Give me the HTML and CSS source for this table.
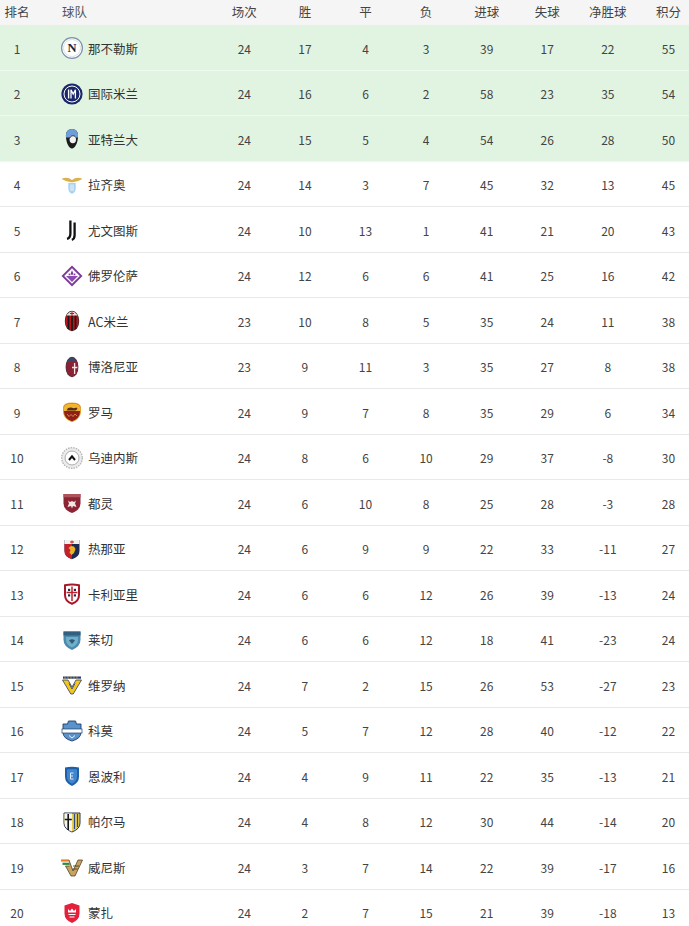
FILE: index.html
```html
<!DOCTYPE html>
<html lang="zh">
<head>
<meta charset="utf-8">
<title>积分榜</title>
<link rel="stylesheet" href="styles.css">
</head>
<body>
<div class="table">
  <div class="row head">
    <div class="c rank">排名</div><div class="c team">球队</div>
    <div class="c n">场次</div><div class="c n">胜</div><div class="c n">平</div><div class="c n">负</div><div class="c n">进球</div><div class="c n">失球</div><div class="c n">净胜球</div><div class="c n">积分</div>
  </div>

  <div class="row top">
    <div class="c rank">1</div>
    <div class="c team"><span class="logo"><svg viewBox="0 0 24 24"><circle cx="12" cy="12" r="10.4" fill="#fff" stroke="#7f90a8" stroke-width="1.2"/><circle cx="12" cy="12" r="8.5" fill="none" stroke="#c3ccd8" stroke-width="0.6"/><text x="12" y="16.3" text-anchor="middle" font-family="Liberation Serif" font-weight="bold" font-size="12.5" fill="#1b2232">N</text></svg></span><span class="name">那不勒斯</span></div>
    <div class="c n">24</div><div class="c n">17</div><div class="c n">4</div><div class="c n">3</div><div class="c n">39</div><div class="c n">17</div><div class="c n">22</div><div class="c n">55</div>
  </div>

  <div class="row top">
    <div class="c rank">2</div>
    <div class="c team"><span class="logo"><svg viewBox="0 0 24 24"><circle cx="12" cy="12" r="10.6" fill="#1a2768"/><circle cx="12" cy="12" r="8" fill="none" stroke="#fff" stroke-width="1"/><path d="M8.6 7.5V16.5" stroke="#fff" stroke-width="1.4"/><path d="M11 16.5V7.8L13.2 12L15.4 7.8V16.5" fill="none" stroke="#fff" stroke-width="1.3"/></svg></span><span class="name">国际米兰</span></div>
    <div class="c n">24</div><div class="c n">16</div><div class="c n">6</div><div class="c n">2</div><div class="c n">58</div><div class="c n">23</div><div class="c n">35</div><div class="c n">54</div>
  </div>

  <div class="row top">
    <div class="c rank">3</div>
    <div class="c team"><span class="logo"><svg viewBox="0 0 24 24"><path d="M12 2C16.5 2 18.5 5.5 18 10.5C17.6 16 15 21.5 12 21.5C9 21.5 6.4 16 6 10.5C5.5 5.5 7.5 2 12 2Z" fill="#1b1b1b"/><path d="M12 2C16.5 2 18.5 5.5 18 10.5L6 10.5C5.5 5.5 7.5 2 12 2Z" fill="#6c9fd8"/><ellipse cx="12.8" cy="12.5" rx="3.2" ry="3.8" fill="#f2f2f2"/><path d="M10 11C10.5 8.5 14 8 15.5 10" fill="none" stroke="#222" stroke-width="0.9"/></svg></span><span class="name">亚特兰大</span></div>
    <div class="c n">24</div><div class="c n">15</div><div class="c n">5</div><div class="c n">4</div><div class="c n">54</div><div class="c n">26</div><div class="c n">28</div><div class="c n">50</div>
  </div>

  <div class="row">
    <div class="c rank">4</div>
    <div class="c team"><span class="logo"><svg viewBox="0 0 24 24"><path d="M1.5 6Q7 3.2 12 7Q17 3.2 22.5 6Q18 8.6 13 9.3L11 9.3Q6 8.6 1.5 6Z" fill="#d9b24c"/><path d="M8.3 10H15.7V15.5Q15.7 19.5 12 20.8Q8.3 19.5 8.3 15.5Z" fill="#a8d3f0"/><path d="M11 11.5V18M13 11.5V18" stroke="#fff" stroke-width="0.8"/></svg></span><span class="name">拉齐奥</span></div>
    <div class="c n">24</div><div class="c n">14</div><div class="c n">3</div><div class="c n">7</div><div class="c n">45</div><div class="c n">32</div><div class="c n">13</div><div class="c n">45</div>
  </div>

  <div class="row">
    <div class="c rank">5</div>
    <div class="c team"><span class="logo"><svg viewBox="0 0 24 24"><path d="M10.4 2.5V15.5Q10.4 20 7 20.8" fill="none" stroke="#111" stroke-width="2.3"/><path d="M14.6 4.5V17.3Q14.6 21 11.8 21.8" fill="none" stroke="#111" stroke-width="2.3"/></svg></span><span class="name">尤文图斯</span></div>
    <div class="c n">24</div><div class="c n">10</div><div class="c n">13</div><div class="c n">1</div><div class="c n">41</div><div class="c n">21</div><div class="c n">20</div><div class="c n">43</div>
  </div>

  <div class="row">
    <div class="c rank">6</div>
    <div class="c team"><span class="logo"><svg viewBox="0 0 24 24"><path d="M12 1.5L22.5 12L12 22.5L1.5 12Z" fill="#7a3a99"/><path d="M12 4.2L19.8 12L12 19.8L4.2 12Z" fill="#fff"/><path d="M6 12H18L12 18Z" fill="#8d4ab2"/><path d="M12 6.2L13.4 9.8L12 11.2L10.6 9.8Z M8.8 9.2Q10.2 9.4 10.8 11.2H8.6Z M15.2 9.2Q13.8 9.4 13.2 11.2H15.4Z" fill="#7a3a99"/></svg></span><span class="name">佛罗伦萨</span></div>
    <div class="c n">24</div><div class="c n">12</div><div class="c n">6</div><div class="c n">6</div><div class="c n">41</div><div class="c n">25</div><div class="c n">16</div><div class="c n">42</div>
  </div>

  <div class="row">
    <div class="c rank">7</div>
    <div class="c team"><span class="logo"><svg viewBox="0 0 24 24"><defs><clipPath id="m7"><ellipse cx="12" cy="12" rx="6.6" ry="9.6"/></clipPath></defs><ellipse cx="12" cy="12" rx="7.2" ry="10.2" fill="#2a2a2a"/><g clip-path="url(#m7)"><rect x="4" y="2" width="16" height="20" fill="#c0141c"/><rect x="7.6" y="2" width="1.8" height="20" fill="#1a1a1a"/><rect x="11.1" y="2" width="1.8" height="20" fill="#1a1a1a"/><rect x="14.6" y="2" width="1.8" height="20" fill="#1a1a1a"/><rect x="4" y="2" width="16" height="4.5" fill="#e9e4e0"/><path d="M12 2.5V6.5M10 4.5H14" stroke="#c0141c" stroke-width="1"/></g></svg></span><span class="name">AC米兰</span></div>
    <div class="c n">23</div><div class="c n">10</div><div class="c n">8</div><div class="c n">5</div><div class="c n">35</div><div class="c n">24</div><div class="c n">11</div><div class="c n">38</div>
  </div>

  <div class="row">
    <div class="c rank">8</div>
    <div class="c team"><span class="logo"><svg viewBox="0 0 24 24"><defs><clipPath id="b8"><ellipse cx="12" cy="12" rx="5.8" ry="9.6"/></clipPath></defs><ellipse cx="12" cy="12" rx="6.4" ry="10.2" fill="#3e3340"/><g clip-path="url(#b8)"><rect x="5" y="2" width="14" height="20" fill="#8a2232"/><rect x="12" y="7" width="7" height="15" fill="#8c2436"/><rect x="5" y="2" width="14" height="5" fill="#3b4568"/><path d="M14.6 8V19M12 12.5H17.5" stroke="#f2e8ea" stroke-width="1.3"/></g></svg></span><span class="name">博洛尼亚</span></div>
    <div class="c n">23</div><div class="c n">9</div><div class="c n">11</div><div class="c n">3</div><div class="c n">35</div><div class="c n">27</div><div class="c n">8</div><div class="c n">38</div>
  </div>

  <div class="row">
    <div class="c rank">9</div>
    <div class="c team"><span class="logo"><svg viewBox="0 0 24 24"><path d="M3.5 7.5Q3.5 3 12 3Q20.5 3 20.5 7.5V11.5Q20.5 18.5 12 21.8Q3.5 18.5 3.5 11.5Z" fill="#8f1e1c" stroke="#e3a427" stroke-width="0.9"/><path d="M3.9 7.5Q3.9 3.4 12 3.4Q20.1 3.4 20.1 7.5V11H3.9Z" fill="#f1b52e"/><path d="M6.5 10.5L8 8L11 7.6L14 8.2L16.5 7.5L17.5 9L15.5 10.5Z" fill="#5a2a1a"/><path d="M7 14L9 16.5L11 14.5L13 16.5L15 14L17 16" fill="none" stroke="#e8a92d" stroke-width="0.8"/></svg></span><span class="name">罗马</span></div>
    <div class="c n">24</div><div class="c n">9</div><div class="c n">7</div><div class="c n">8</div><div class="c n">35</div><div class="c n">29</div><div class="c n">6</div><div class="c n">34</div>
  </div>

  <div class="row">
    <div class="c rank">10</div>
    <div class="c team"><span class="logo"><svg viewBox="0 0 24 24"><circle cx="12" cy="12" r="10.3" fill="#ececec" stroke="#b9b9b9" stroke-width="1.4" stroke-dasharray="1.6 1"/><circle cx="12" cy="12" r="7" fill="#fdfdfd" stroke="#9a9a9a" stroke-width="0.8"/><path d="M9 14L12 10.3L15 14" fill="none" stroke="#111" stroke-width="2"/></svg></span><span class="name">乌迪内斯</span></div>
    <div class="c n">24</div><div class="c n">8</div><div class="c n">6</div><div class="c n">10</div><div class="c n">29</div><div class="c n">37</div><div class="c n">-8</div><div class="c n">30</div>
  </div>

  <div class="row">
    <div class="c rank">11</div>
    <div class="c team"><span class="logo"><svg viewBox="0 0 24 24"><path d="M3.5 3H20.5V12.5Q20.5 19 12 22Q3.5 19 3.5 12.5Z" fill="#8b2433"/><path d="M3.5 3H20.5V6.3H3.5Z" fill="#b0545c"/><path d="M8 9.5L10 11L12 10L14 11L16 9.5L15 12.5L16.5 16L13 15L12 17.5L11 15L7.5 16L9 12.5Z" fill="#f3e6e6"/></svg></span><span class="name">都灵</span></div>
    <div class="c n">24</div><div class="c n">6</div><div class="c n">10</div><div class="c n">8</div><div class="c n">25</div><div class="c n">28</div><div class="c n">-3</div><div class="c n">28</div>
  </div>

  <div class="row">
    <div class="c rank">12</div>
    <div class="c team"><span class="logo"><svg viewBox="0 0 24 24"><path d="M4.5 3H19.5V14Q19.5 20 12 22.2Q4.5 20 4.5 14Z" fill="#1e2a52"/><path d="M4.5 7H12V22.2Q4.5 20 4.5 14Z" fill="#c8202a"/><path d="M4.5 3H19.5V7H4.5Z" fill="#f4f0ea"/><path d="M12 3.4V6.6M10 5H14" stroke="#c8202a" stroke-width="1.1"/><path d="M8.5 11L11 9L14 9.5L15.5 12L14 16L11.5 18L9.5 15.5L10.5 13Z" fill="#e9b526"/></svg></span><span class="name">热那亚</span></div>
    <div class="c n">24</div><div class="c n">6</div><div class="c n">9</div><div class="c n">9</div><div class="c n">22</div><div class="c n">33</div><div class="c n">-11</div><div class="c n">27</div>
  </div>

  <div class="row">
    <div class="c rank">13</div>
    <div class="c team"><span class="logo"><svg viewBox="0 0 24 24"><path d="M5 3.2Q12 1.6 19 3.2V13Q19 19.2 12 21.8Q5 19.2 5 13Z" fill="#fff" stroke="#a8182c" stroke-width="2"/><path d="M12 4.5V19M6.5 10.5H17.5" stroke="#c2202e" stroke-width="1.5"/><rect x="8" y="6.8" width="2.2" height="2.2" fill="#2a2a3a"/><rect x="13.8" y="6.8" width="2.2" height="2.2" fill="#2a2a3a"/><rect x="8" y="12.3" width="2.2" height="2.2" fill="#2a2a3a"/><rect x="13.8" y="12.3" width="2.2" height="2.2" fill="#2a2a3a"/></svg></span><span class="name">卡利亚里</span></div>
    <div class="c n">24</div><div class="c n">6</div><div class="c n">6</div><div class="c n">12</div><div class="c n">26</div><div class="c n">39</div><div class="c n">-13</div><div class="c n">24</div>
  </div>

  <div class="row">
    <div class="c rank">14</div>
    <div class="c team"><span class="logo"><svg viewBox="0 0 24 24"><path d="M3.5 3.5H20.5V11.5Q20.5 18.5 12 22Q3.5 18.5 3.5 11.5Z" fill="#4a89ad"/><path d="M3.5 3.5H20.5V7.5H3.5Z" fill="#335f80"/><path d="M6 9H18V12Q18 17 12 19.5Q6 17 6 12Z" fill="#6fb0c8"/><path d="M9 12.5Q12 10 15 12.5L12 16Z" fill="#2e5c78"/></svg></span><span class="name">莱切</span></div>
    <div class="c n">24</div><div class="c n">6</div><div class="c n">6</div><div class="c n">12</div><div class="c n">18</div><div class="c n">41</div><div class="c n">-23</div><div class="c n">24</div>
  </div>

  <div class="row">
    <div class="c rank">15</div>
    <div class="c team"><span class="logo"><svg viewBox="0 0 24 24"><rect x="3" y="3.5" width="18" height="2.2" fill="#2b3b78"/><path d="M5 3.5V5.7M8 3.5V5.7M11 3.5V5.7M14 3.5V5.7M17 3.5V5.7" stroke="#f2c81b" stroke-width="0.7"/><path d="M2.5 7L8 7L12 14L16 7L21.5 7L13.2 21H10.8Z" fill="#f2c81b" stroke="#2b3b78" stroke-width="0.8"/><path d="M9 10.5L12 16L15 10.5" fill="none" stroke="#2b3b78" stroke-width="0.8"/></svg></span><span class="name">维罗纳</span></div>
    <div class="c n">24</div><div class="c n">7</div><div class="c n">2</div><div class="c n">15</div><div class="c n">26</div><div class="c n">53</div><div class="c n">-27</div><div class="c n">23</div>
  </div>

  <div class="row">
    <div class="c rank">16</div>
    <div class="c team"><span class="logo"><svg viewBox="0 0 24 24"><path d="M8.5 2H15.5L16.5 5H21V13.5Q21 19.5 12 22Q3 19.5 3 13.5V5H7.5Z" fill="#5b92ca" stroke="#1e3f6e" stroke-width="0.9"/><rect x="2" y="10" width="20" height="4" fill="#fff" stroke="#1e3f6e" stroke-width="0.7"/><path d="M9 16.5L12 19L15 16.5" fill="none" stroke="#fff" stroke-width="0.9"/></svg></span><span class="name">科莫</span></div>
    <div class="c n">24</div><div class="c n">5</div><div class="c n">7</div><div class="c n">12</div><div class="c n">28</div><div class="c n">40</div><div class="c n">-12</div><div class="c n">22</div>
  </div>

  <div class="row">
    <div class="c rank">17</div>
    <div class="c team"><span class="logo"><svg viewBox="0 0 24 24"><path d="M5 3.5Q12 1.8 19 3.5V12.5Q19 19 12 22Q5 19 5 12.5Z" fill="#1f5fa8"/><path d="M7 5.5Q12 4.3 17 5.5V12.5Q17 17.5 12 19.8Q7 17.5 7 12.5Z" fill="#3f86cf"/><path d="M13.5 9H10.5V15H13.5M10.5 12H13" fill="none" stroke="#dfeaf6" stroke-width="1"/></svg></span><span class="name">恩波利</span></div>
    <div class="c n">24</div><div class="c n">4</div><div class="c n">9</div><div class="c n">11</div><div class="c n">22</div><div class="c n">35</div><div class="c n">-13</div><div class="c n">21</div>
  </div>

  <div class="row">
    <div class="c rank">18</div>
    <div class="c team"><span class="logo"><svg viewBox="0 0 24 24"><path d="M4 3H20V13Q20 19 12 22Q4 19 4 13Z" fill="#e9ce4a" stroke="#2a3550" stroke-width="1"/><path d="M4.5 3.5H12V21.5Q4.5 18.6 4.5 13Z" fill="#f4f4f0"/><path d="M8.2 4V20M4.8 9.5H11.8" stroke="#151515" stroke-width="1.6"/><path d="M14.5 4V19M17.5 4V17" stroke="#2a4a8c" stroke-width="1.2"/></svg></span><span class="name">帕尔马</span></div>
    <div class="c n">24</div><div class="c n">4</div><div class="c n">8</div><div class="c n">12</div><div class="c n">30</div><div class="c n">44</div><div class="c n">-14</div><div class="c n">20</div>
  </div>

  <div class="row">
    <div class="c rank">19</div>
    <div class="c team"><span class="logo"><svg viewBox="0 0 24 24"><path d="M1 5.5H9" stroke="#ec7a22" stroke-width="2.2"/><path d="M2.5 8.8H10" stroke="#2e8a3a" stroke-width="2.2"/><path d="M9 5L13 16L18 5H22.5L15 21H11L5.5 11H9.5" fill="#c8a45e" stroke="#3b3020" stroke-width="0.7"/><path d="M13 11H19M12.5 14H17.5" stroke="#3b3020" stroke-width="0.8"/></svg></span><span class="name">威尼斯</span></div>
    <div class="c n">24</div><div class="c n">3</div><div class="c n">7</div><div class="c n">14</div><div class="c n">22</div><div class="c n">39</div><div class="c n">-17</div><div class="c n">16</div>
  </div>

  <div class="row">
    <div class="c rank">20</div>
    <div class="c team"><span class="logo"><svg viewBox="0 0 24 24"><path d="M4.5 4.5L12 2L19.5 4.5V12.5Q19.5 19 12 22Q4.5 19 4.5 12.5Z" fill="#e3213c"/><path d="M8 8L10 10L12 7.5L14 10L16 8V11.5H8Z" fill="#fff"/><path d="M8.5 13.5H15.5M9.5 16H14.5" stroke="#fff" stroke-width="1"/></svg></span><span class="name">蒙扎</span></div>
    <div class="c n">24</div><div class="c n">2</div><div class="c n">7</div><div class="c n">15</div><div class="c n">21</div><div class="c n">39</div><div class="c n">-18</div><div class="c n">13</div>
  </div>
</div>
</body>
</html>
```

FILE: styles.css
```css
html, body {
  margin: 0;
  padding: 0;
  background: #fff;
  overflow: hidden;
}
body {
  font-family: "Noto Sans CJK SC", "Noto Sans", sans-serif;
  color: #333;
  width: 689px;
}
.table {
  width: 699px;
}
.row {
  display: grid;
  grid-template-columns: 34px 180px repeat(8, 60.6px);
  height: 45.5px;
  box-sizing: border-box;
  border-bottom: 1px solid #e9e9e9;
  background: #fff;
  align-items: center;
  padding-top: 3px;
  font-size: 12px;
}
.row.top {
  background: #e1f4e2;
  border-bottom-color: #eef9ef;
}
.row.head {
  height: 25px;
  padding-top: 0;
  background: #f5f5f5;
  border-bottom: none;
  color: #555;
  font-size: 12.5px;
}
.c {
  text-align: center;
  white-space: nowrap;
  line-height: 1;
}
.rank {
  color: #444;
}
.team {
  text-align: left;
  padding-left: 26px;
  display: flex;
  align-items: center;
}
.head .team {
  padding-left: 28px;
}
.logo {
  width: 24px;
  height: 24px;
  display: inline-flex;
  flex: none;
  margin-top: -1px;
}
.logo svg {
  width: 24px;
  height: 24px;
  display: block;
}
.name {
  margin-left: 4px;
  font-size: 12.5px;
  color: #333;
}
.n {
  color: #444;
}
```
